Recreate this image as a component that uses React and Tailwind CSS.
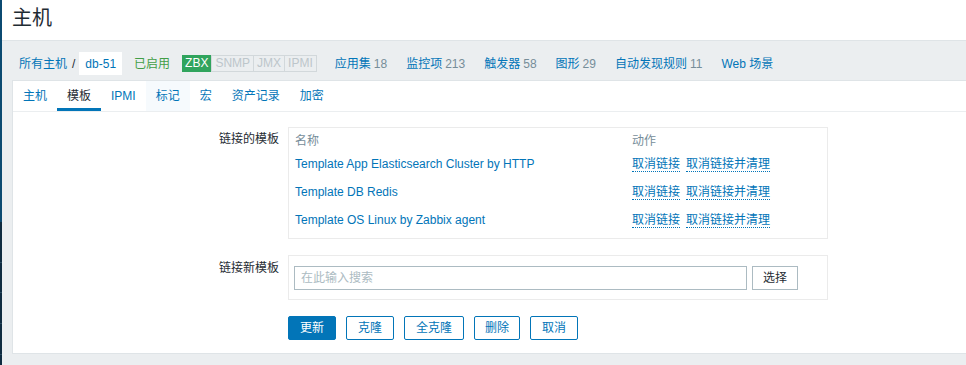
export default function App() {
  const linked = [
    "Template App Elasticsearch Cluster by HTTP",
    "Template DB Redis",
    "Template OS Linux by Zabbix agent",
  ];
  const tabs = ["主机", "模板", "IPMI", "标记", "宏", "资产记录", "加密"];
  const nav = [
    ["应用集", "18"],
    ["监控项", "213"],
    ["触发器", "58"],
    ["图形", "29"],
    ["自动发现规则", "11"],
    ["Web 场景", ""],
  ];

  return (
    <div className="flex h-[365px] w-[966px] overflow-hidden bg-[#ebeef0] font-['Liberation_Sans','Noto_Sans_CJK_SC',sans-serif] text-[12px] text-[#1f2c33]">
      {/* sidebar edge */}
      <div className="flex w-[2px] shrink-0 flex-col">
        <div className="h-[222px] bg-[#0b4a71]"></div>
        <div className="flex-1 bg-[#0f2b40]">
          <div className="mt-[40px] h-px bg-[#2a4b60]"></div>
          <div className="mt-[29px] h-px bg-[#2a4b60]"></div>
          <div className="mt-[30px] h-px bg-[#2a4b60]"></div>
          <div className="mt-[30px] h-px bg-[#2a4b60]"></div>
        </div>
      </div>

      <div className="flex min-w-0 flex-1 flex-col">
        {/* header */}
        <div className="flex h-[41px] items-center border-b border-[#dfe4e7] bg-white pb-[5px] pl-[10px]">
          <h1 className="text-[20px] leading-none text-[#1f2c33]">主机</h1>
        </div>

        {/* breadcrumb nav */}
        <div className="flex h-[23px] items-center pl-[17px] mt-[11px] mb-[5px] whitespace-nowrap">
          <span className="text-[#0275b8]">所有主机</span>
          <span className="ml-[5px] text-[#1f2c33]">/</span>
          <span className="ml-[4px] flex h-[23px] items-center bg-white px-[6px] text-[#0275b8]">db-51</span>
          <span className="ml-[12px] text-[#429e47]">已启用</span>
          <div className="ml-[12px] flex h-[17px] items-stretch leading-[15px]">
            <span className="flex items-center bg-[#30a45d] px-[3px] text-white">ZBX</span>
            <span className="flex items-center border border-[#d2d8db] px-[3px] text-[#bdc6cb]">SNMP</span>
            <span className="flex items-center border border-l-0 border-[#d2d8db] px-[3px] text-[#bdc6cb]">JMX</span>
            <span className="flex items-center border border-l-0 border-[#d2d8db] px-[3px] text-[#bdc6cb]">IPMI</span>
          </div>
          <div className="ml-[18px] flex gap-[19px]">
            {nav.map(([label, count]) => (
              <span key={label}>
                <span className="text-[#0275b8]">{label}</span>
                {count && <span className="ml-[3px] text-[#768d99]">{count}</span>}
              </span>
            ))}
          </div>
        </div>

        {/* content box */}
        <div className="ml-[10px] flex h-[274px] flex-col border-y border-l border-[#dfe4e7] bg-white">
          <div className="flex h-[31px] border-b border-[#ebeef0]">
            {tabs.map((t) => (
              <div
                key={t}
                className={
                  t === "模板"
                    ? "flex items-center border-b-[3px] border-[#0275b8] px-[10px] pt-[3px] text-[#1f2c33]"
                    : t === "标记"
                    ? "flex items-center bg-[#f6fafd] px-[10px] text-[#0275b8]"
                    : "flex items-center px-[10px] text-[#0275b8]"
                }
              >
                {t}
              </div>
            ))}
          </div>

          <div className="flex flex-col pt-[15px]">
            {/* linked templates */}
            <div className="flex">
              <div className="w-[266px] pt-[4px] text-right leading-[16px]">链接的模板</div>
              <div className="ml-[9px] w-[540px] border border-[#ebebeb] px-[6px] pt-[4px] pb-[5px]">
                <table className="w-full border-collapse">
                  <thead>
                    <tr className="h-[16px] text-left text-[#768d99]">
                      <th className="w-[337px] p-0 font-normal">名称</th>
                      <th className="p-0 font-normal">动作</th>
                    </tr>
                  </thead>
                  <tbody>
                    {linked.map((name, i) => (
                      <tr key={name} className={i === 2 ? "h-[27px]" : "h-[28px]"}>
                        <td className="p-0 text-[#0275b8]">{name}</td>
                        <td className="p-0">
                          <span className="border-b border-dotted border-[#0275b8] text-[#0275b8]">取消链接</span>
                          <span className="ml-[6px] border-b border-dotted border-[#0275b8] text-[#0275b8]">取消链接并清理</span>
                        </td>
                      </tr>
                    ))}
                  </tbody>
                </table>
              </div>
            </div>

            {/* link new template */}
            <div className="mt-[16px] flex">
              <div className="w-[266px] pt-[5px] text-right leading-[16px]">链接新模板</div>
              <div className="ml-[9px] flex w-[540px] items-center gap-[5px] border border-[#ebebeb] px-[5px] pt-[10px] pb-[9px]">
                <div className="flex h-[24px] w-[453px] items-center border border-[#acbbc2] px-[6px] text-[#acbbc2]">在此输入搜索</div>
                <div className="flex h-[24px] w-[46px] items-center justify-center border border-[#acbbc2] text-[#1f2c33]">选择</div>
              </div>
            </div>

            {/* buttons */}
            <div className="mt-[16px] ml-[275px] flex gap-[10px]">
              <div className="flex h-[24px] items-center rounded-[2px] border border-[#0275b8] bg-[#0275b8] px-[11px] text-white">更新</div>
              <div className="flex h-[24px] items-center rounded-[2px] border border-[#0275b8] bg-white px-[11px] text-[#0275b8]">克隆</div>
              <div className="flex h-[24px] items-center rounded-[2px] border border-[#0275b8] bg-white px-[11px] text-[#0275b8]">全克隆</div>
              <div className="flex h-[24px] items-center rounded-[2px] border border-[#0275b8] bg-white px-[10px] text-[#0275b8]">删除</div>
              <div className="flex h-[24px] items-center rounded-[2px] border border-[#0275b8] bg-white px-[11px] text-[#0275b8]">取消</div>
            </div>
          </div>
        </div>
      </div>
    </div>
  );
}
